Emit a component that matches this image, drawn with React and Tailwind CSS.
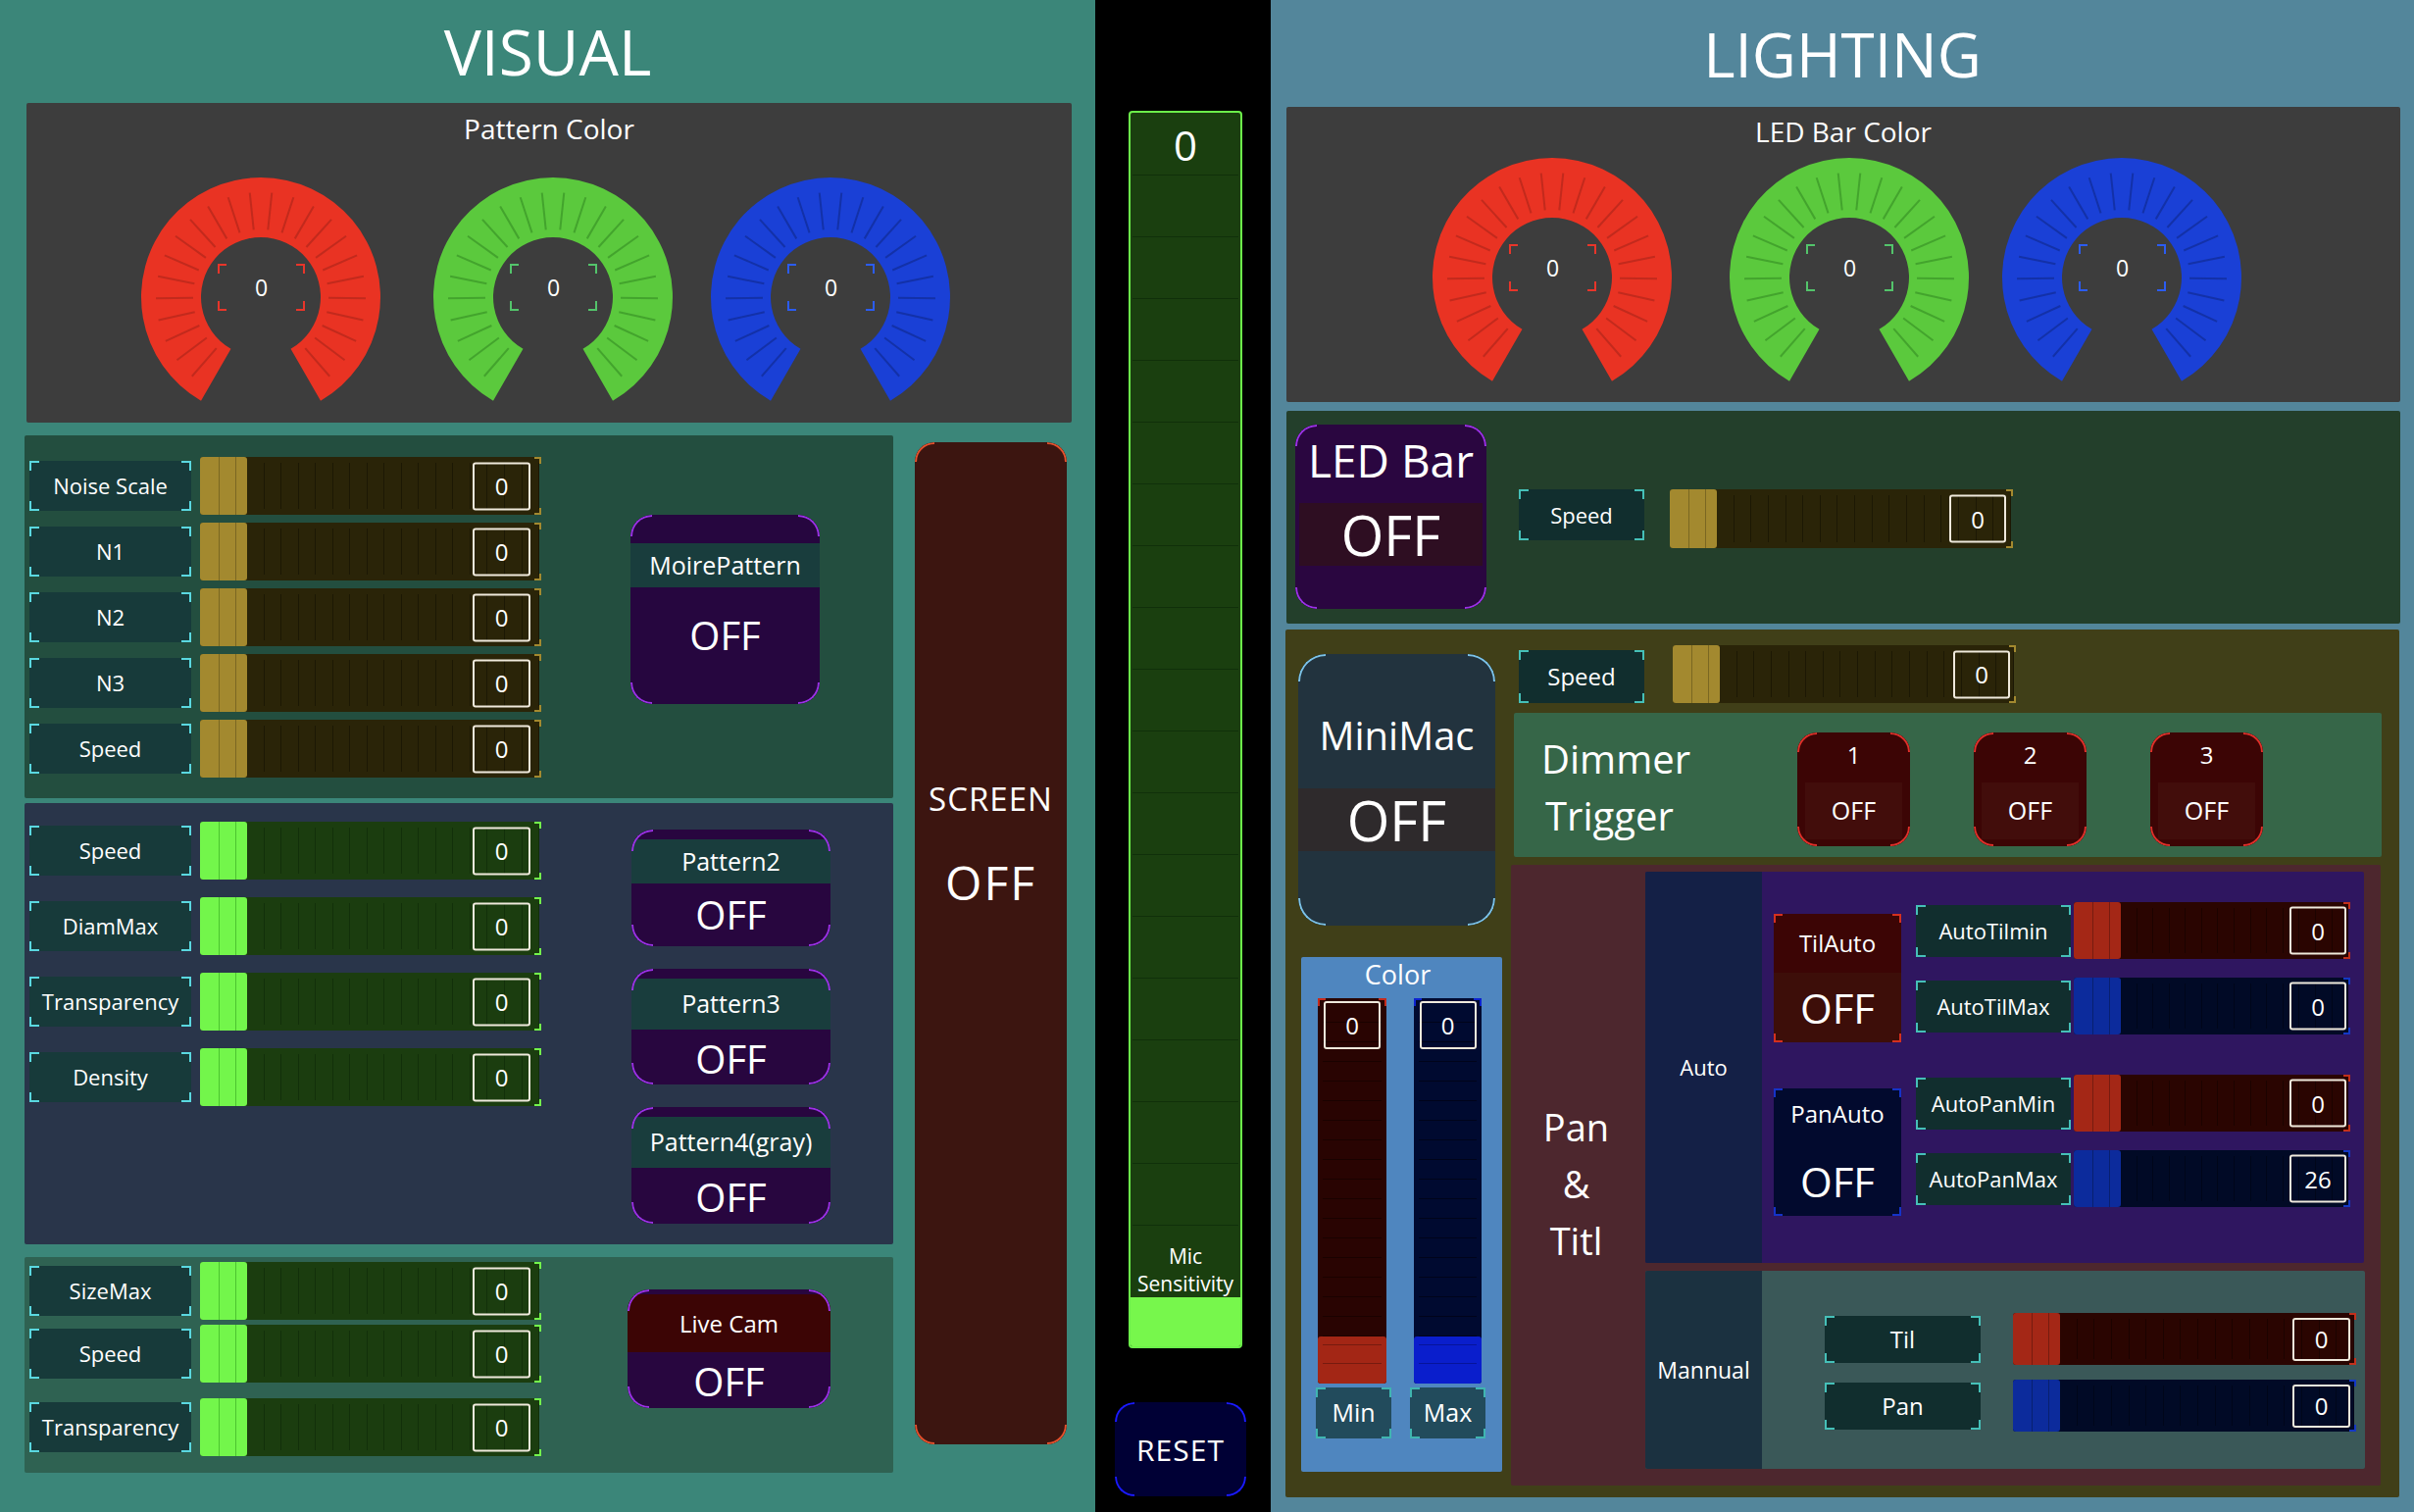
import React from "react";

// corner brackets (square)
const Brackets = ({ c, s = "w-[10px] h-[10px]" }) => (
  <>
    <span className={`pointer-events-none absolute left-0 top-0 border-l-2 border-t-2 ${s} ${c}`} />
    <span className={`pointer-events-none absolute right-0 top-0 border-r-2 border-t-2 ${s} ${c}`} />
    <span className={`pointer-events-none absolute left-0 bottom-0 border-l-2 border-b-2 ${s} ${c}`} />
    <span className={`pointer-events-none absolute right-0 bottom-0 border-r-2 border-b-2 ${s} ${c}`} />
  </>
);

// rounded corner arcs
const ARC = {
  s: ["w-[22px] h-[22px] rounded-tl-[22px]", "w-[22px] h-[22px] rounded-tr-[22px]", "w-[22px] h-[22px] rounded-bl-[22px]", "w-[22px] h-[22px] rounded-br-[22px]"],
  m: ["w-[20px] h-[20px] rounded-tl-[20px]", "w-[20px] h-[20px] rounded-tr-[20px]", "w-[20px] h-[20px] rounded-bl-[20px]", "w-[20px] h-[20px] rounded-br-[20px]"],
  l: ["w-[28px] h-[28px] rounded-tl-[28px]", "w-[28px] h-[28px] rounded-tr-[28px]", "w-[28px] h-[28px] rounded-bl-[28px]", "w-[28px] h-[28px] rounded-br-[28px]"],
};

const Arcs = ({ c, v = "s" }) => {
  const [tl, tr, bl, br] = ARC[v];
  return (
    <>
      <span className={`pointer-events-none absolute left-0 top-0 border-l-2 border-t-2 ${tl} ${c}`} />
      <span className={`pointer-events-none absolute right-0 top-0 border-r-2 border-t-2 ${tr} ${c}`} />
      <span className={`pointer-events-none absolute left-0 bottom-0 border-l-2 border-b-2 ${bl} ${c}`} />
      <span className={`pointer-events-none absolute right-0 bottom-0 border-r-2 border-b-2 ${br} ${c}`} />
    </>
  );
};

const Toggle = ({ className = "", bg, c, v = "s", round = "rounded-[22px]", children }) => (
  <div className={`relative shrink-0 flex flex-col overflow-hidden ${round} ${bg} ${className}`}>
    {children}
    <Arcs c={c} v={v} />
  </div>
);

const Label = ({ children, className = "", bg = "bg-[#173a3a]", c = "border-[#5ad8e0]" }) => (
  <div className={`relative shrink-0 flex items-center justify-center whitespace-nowrap ${bg} ${className}`}>
    {children}
    <Brackets c={c} />
  </div>
);

const SL = {
  gold: { track: "bg-[#2a2408]", handle: "bg-[#a3892f]", hl: "bg-[#7a6722]", line: "border-[#1c1804]", corner: "border-[#a3892f]" },
  green: { track: "bg-[#1b3d0f]", handle: "bg-[#73f64b]", hl: "bg-[#4cc52f]", line: "border-[#12300a]", corner: "border-[#73f64b]" },
  red: { track: "bg-[#2a0501]", handle: "bg-[#a42716]", hl: "bg-[#761b0f]", line: "border-[#1c0300]", corner: "border-[#c2301c]" },
  blue: { track: "bg-[#010a26]", handle: "bg-[#0c2b9c]", hl: "bg-[#08206f]", line: "border-[#00061a]", corner: "border-[#1438c4]" },
};

const Slider = ({ t, className = "", box = "w-[59px] h-[49px] right-[9px]", value = "0", n = 17 }) => {
  const s = SL[t];
  return (
    <div className={`relative shrink-0 flex rounded-[3px] ${s.track} ${className}`}>
      <div className={`h-full w-[48px] shrink-0 rounded-[3px] flex pl-[19px] gap-[16px] ${s.handle}`}>
        <span className={`w-px h-full ${s.hl}`} />
        <span className={`w-px h-full ${s.hl}`} />
      </div>
      <div className="flex-1 flex py-[6px]">
        {Array.from({ length: n }).map((_, i) => (
          <span key={i} className={`flex-1 border-r ${s.line}`} />
        ))}
      </div>
      <div className={`absolute top-1/2 -translate-y-1/2 ${box} border-2 border-[#efe9dc] rounded-[3px] flex items-center justify-center text-[24px] leading-none`}>
        {value}
      </div>
      <span className={`absolute -right-[2px] top-0 w-[7px] h-[7px] border-t-2 border-r-2 ${s.corner}`} />
      <span className={`absolute -right-[2px] bottom-0 w-[7px] h-[7px] border-b-2 border-r-2 ${s.corner}`} />
    </div>
  );
};

const VS = {
  red: { track: "bg-[#290402]", handle: "bg-[#a32615]", hl: "border-[#761b0f]", line: "border-[#1a0200]", corner: "border-[#c42a1c]" },
  blue: { track: "bg-[#000a30]", handle: "bg-[#0a1ecc]", hl: "border-[#06149a]", line: "border-[#00041a]", corner: "border-[#0c22d0]" },
};

const VSlider = ({ t, className = "" }) => {
  const s = VS[t];
  return (
    <div className={`relative shrink-0 flex flex-col rounded-[3px] ${s.track} ${className}`}>
      <div className="flex-1 flex flex-col justify-end overflow-hidden px-[5px]">
        {Array.from({ length: 17 }).map((_, i) => (
          <span key={i} className={`h-[20px] shrink-0 border-b ${s.line}`} />
        ))}
      </div>
      <div className={`h-[48px] shrink-0 rounded-[3px] flex flex-col px-[5px] pt-[8px] ${s.handle}`}>
        <span className={`h-[19px] border-t ${s.hl}`} />
        <span className={`border-t ${s.hl}`} />
      </div>
      <div className="absolute left-1/2 -translate-x-1/2 top-[3px] w-[58px] h-[49px] border-2 border-[#efe9dc] rounded-[3px] flex items-center justify-center text-[24px] leading-none">
        0
      </div>
      <span className={`absolute left-0 top-0 w-[8px] h-[8px] border-t-2 border-l-2 ${s.corner}`} />
      <span className={`absolute right-0 top-0 w-[8px] h-[8px] border-t-2 border-r-2 ${s.corner}`} />
    </div>
  );
};

// knob drawing
const KN = {
  red: { fill: "#e93323", tick: "#c22a1d", br: "border-[#e8352a]" },
  green: { fill: "#5bc93d", tick: "#43a42d", br: "border-[#53c46b]" },
  blue: { fill: "#1a40d6", tick: "#1331a8", br: "border-[#2b5cf2]" },
};
const pt = (r, d) => {
  const a = (d * Math.PI) / 180;
  return [124 - r * Math.sin(a), 124 + r * Math.cos(a)];
};
const ps = (r, d) => pt(r, d).map((v) => v.toFixed(2)).join(" ");
const RING = `M ${ps(122, 30)} A 122 122 0 1 1 ${ps(122, 330)} L ${ps(61, 330)} A 61 61 0 1 0 ${ps(61, 30)} Z`;
const TICKS = Array.from({ length: 24 }, (_, i) => 41 + (i * 278) / 23);

const Knob = ({ color, className = "" }) => {
  const k = KN[color];
  return (
    <div className={`relative w-[248px] h-[232px] shrink-0 ${className}`}>
      <svg width="248" height="232" viewBox="0 0 248 232">
        <path d={RING} fill={k.fill} />
        {TICKS.map((d, i) => {
          const [x1, y1] = pt(69, d);
          const [x2, y2] = pt(107, d);
          return <line key={i} x1={x1} y1={y1} x2={x2} y2={y2} stroke={k.tick} strokeWidth="2" />;
        })}
      </svg>
      <div className="absolute left-[80px] top-[90px] w-[89px] h-[48px] flex items-center justify-center text-[23px] leading-none">
        0
        <Brackets c={k.br} s="w-[9px] h-[10px]" />
      </div>
    </div>
  );
};

const Row = ({ label, t, lc = "" }) => (
  <div className="flex items-center gap-[9px]">
    <Label className={`w-[165px] h-[51px] text-[22px] ${lc}`}>{label}</Label>
    <Slider t={t} className="w-[346px] h-[59px]" />
  </div>
);

const Visual = () => (
  <div className="w-[1117px] h-full shrink-0 bg-[#3b8679] flex flex-col">
    <div className="h-[105px] flex items-center justify-center text-[64px] leading-none">VISUAL</div>
    <div className="ml-[27px] w-[1066px] h-[326px] bg-[#3d3d3d] rounded-[2px] flex flex-col">
      <div className="pt-[9px] text-[28px] leading-[34px] text-center">Pattern Color</div>
      <div className="mt-[31px] flex">
        <Knob color="red" className="ml-[115px]" />
        <Knob color="green" className="ml-[50px]" />
        <Knob color="blue" className="ml-[35px]" />
      </div>
    </div>

    <div className="mt-[13px] flex">
      <div className="ml-[25px] w-[886px] flex flex-col">
        {/* noise section */}
        <div className="h-[370px] bg-[#234e3f] rounded-[2px] flex">
          <div className="pl-[5px] pt-[22px] flex flex-col gap-[8px]">
            {["Noise Scale", "N1", "N2", "N3", "Speed"].map((l) => (
              <Row key={l} label={l} t="gold" />
            ))}
          </div>
          <Toggle className="ml-[93px] mt-[81px] w-[193px] h-[193px]" bg="bg-[#26063f]" c="border-[#9b32e6]">
            <div className="h-[29px] shrink-0" />
            <div className="h-[45px] shrink-0 bg-[#193d3d] flex items-center justify-center text-[25px]">MoirePattern</div>
            <div className="mt-[24px] text-center text-[40px] leading-[50px]">OFF</div>
          </Toggle>
        </div>

        {/* pattern section */}
        <div className="mt-[5px] h-[450px] bg-[#29354a] rounded-[2px] flex">
          <div className="pl-[5px] pt-[19px] flex flex-col gap-[18px]">
            {["Speed", "DiamMax", "Transparency", "Density"].map((l) => (
              <Row key={l} label={l} t="green" />
            ))}
          </div>
          <div className="ml-[94px] mt-[27px] flex flex-col gap-[23px]">
            <Toggle className="w-[203px] h-[119px]" bg="bg-[#28063f]" c="border-[#9b32e6]">
              <div className="mt-[10px] h-[45px] shrink-0 bg-[#193d3d] flex items-center justify-center text-[25px]">Pattern2</div>
              <div className="flex-1 flex items-center justify-center text-[40px]">OFF</div>
            </Toggle>
            <Toggle className="w-[203px] h-[118px]" bg="bg-[#28063f]" c="border-[#9b32e6]">
              <div className="mt-[10px] h-[52px] shrink-0 bg-[#193d3d] flex items-center justify-center text-[25px]">Pattern3</div>
              <div className="flex-1 flex items-center justify-center text-[40px]">OFF</div>
            </Toggle>
            <Toggle className="w-[203px] h-[119px]" bg="bg-[#28063f]" c="border-[#9b32e6]">
              <div className="mt-[10px] h-[52px] shrink-0 bg-[#193d3d] flex items-center justify-center text-[25px]">Pattern4(gray)</div>
              <div className="flex-1 flex items-center justify-center text-[40px]">OFF</div>
            </Toggle>
          </div>
        </div>

        {/* cam section */}
        <div className="mt-[13px] h-[220px] bg-[#2f6252] rounded-[2px] flex">
          <div className="pl-[5px] pt-[5px] flex flex-col">
            <Row label="SizeMax" t="green" />
            <div className="mt-[5px]">
              <Row label="Speed" t="green" />
            </div>
            <div className="mt-[16px]">
              <Row label="Transparency" t="green" />
            </div>
          </div>
          <Toggle className="ml-[90px] mt-[33px] w-[207px] h-[121px]" bg="bg-[#28063f]" c="border-[#9b32e6]">
            <div className="mt-[5px] h-[59px] shrink-0 bg-[#3c0505] flex items-center justify-center text-[24px]">Live Cam</div>
            <div className="flex-1 flex items-center justify-center text-[40px]">OFF</div>
          </Toggle>
        </div>
      </div>

      <Toggle className="ml-[22px] mt-[7px] w-[155px] h-[1022px] items-center" bg="bg-[#3c1510]" c="border-[#e4502c]" v="m" round="rounded-[20px]">
        <div className="mt-[344px] text-[33px] leading-[40px] tracking-[1px]">SCREEN</div>
        <div className="mt-[37px] text-[48px] leading-[56px] tracking-[2px]">OFF</div>
      </Toggle>
    </div>
  </div>
);

const Middle = () => (
  <div className="w-[179px] h-full shrink-0 bg-black flex flex-col">
    <div className="ml-[34px] mt-[113px] w-[116px] h-[1262px] border-2 border-[#6cf04a] rounded-[4px] bg-[#1a3f0f] flex flex-col overflow-hidden">
      <div className="h-[63px] shrink-0 flex items-start justify-center pt-[8px] text-[42px] leading-[50px]">0</div>
      {Array.from({ length: 17 }).map((_, i) => (
        <div key={i} className="h-[63px] shrink-0 mx-[2px] border-t border-[#10300a]" />
      ))}
      <div className="flex-1 mx-[2px] border-t border-[#10300a] flex flex-col justify-end items-center text-[21px] leading-[28px] text-center">
        <span>Mic</span>
        <span>Sensitivity</span>
      </div>
      <div className="h-[50px] shrink-0 bg-[#77f74c]" />
    </div>
    <Toggle className="ml-[20px] mt-[55px] w-[134px] h-[96px] items-center justify-center" bg="bg-[#000035]" c="border-[#1a1aff]" v="m" round="rounded-[20px]">
      <span className="text-[30px] tracking-[1px]">RESET</span>
    </Toggle>
  </div>
);

const DimBtn = ({ n }) => (
  <Toggle className="mt-[20px] w-[115px] h-[116px] items-center" bg="bg-[#3c0505]" c="border-[#e0302a]" v="m" round="rounded-[20px]">
    <div className="mt-[8px] text-[24px] leading-[30px]">{n}</div>
    <div className="mt-[13px] w-[99px] h-[58px] bg-[#420d0b] flex items-center justify-center text-[25px]">OFF</div>
  </Toggle>
);

const AutoRow = ({ label, t, value = "0" }) => (
  <div className="flex items-center">
    <Label className="w-[158px] h-[53px] text-[22px]" bg="bg-[#112e2e]" c="border-[#45c0b8]">{label}</Label>
    <Slider t={t} className="ml-[3px] w-[280px] h-[58px]" box="w-[58px] h-[49px] right-[2px]" value={value} n={14} />
  </div>
);

const Lighting = () => (
  <div className="w-[1166px] h-full shrink-0 bg-[#53869b] flex flex-col">
    <div className="h-[109px] flex items-center justify-center text-[62px] leading-none">LIGHTING</div>
    <div className="ml-[16px] w-[1136px] h-[301px] bg-[#3d3d3d] rounded-[2px] flex flex-col">
      <div className="pt-[8px] text-[28px] leading-[34px] text-center">LED Bar Color</div>
      <div className="mt-[8px] flex">
        <Knob color="red" className="ml-[147px]" />
        <Knob color="green" className="ml-[55px]" />
        <Knob color="blue" className="ml-[30px]" />
      </div>
    </div>

    {/* LED bar */}
    <div className="mt-[9px] ml-[16px] w-[1136px] h-[217px] bg-[#233f2b] rounded-[2px] flex items-start">
      <Toggle className="ml-[9px] mt-[14px] w-[195px] h-[188px]" bg="bg-[#2a0640]" c="border-[#9b32e6]">
        <div className="mt-[9px] text-center text-[46px] leading-[54px]">LED Bar</div>
        <div className="mt-[17px] mx-[4px] h-[64px] bg-[#2e0e22] flex items-center justify-center text-[56px]">OFF</div>
      </Toggle>
      <Label className="ml-[33px] mt-[80px] w-[128px] h-[52px] text-[22px]" bg="bg-[#112e2e]" c="border-[#45c0b8]">Speed</Label>
      <Slider t="gold" className="ml-[26px] mt-[80px] w-[348px] h-[60px]" box="w-[58px] h-[49px] right-[5px]" />
    </div>

    {/* MiniMac */}
    <div className="mt-[6px] ml-[15px] w-[1136px] h-[885px] bg-[#403f18] rounded-[2px] flex">
      <div className="ml-[13px] flex flex-col">
        <Toggle className="mt-[25px] w-[201px] h-[277px]" bg="bg-[#22333e]" c="border-[#7cc3e8]" v="l" round="rounded-[28px]">
          <div className="mt-[59px] text-center text-[40px] leading-[48px]">MiniMac</div>
          <div className="mt-[30px] h-[64px] bg-[#2e2a2c] flex items-center justify-center text-[56px]">OFF</div>
        </Toggle>
        <div className="ml-[3px] mt-[32px] w-[205px] h-[525px] bg-[#4f86bf] rounded-[2px] flex flex-col">
          <div className="mt-[1px] pr-[8px] text-center text-[27px] leading-[34px]">Color</div>
          <div className="mt-[7px] pl-[17px] flex gap-[28px]">
            <VSlider t="red" className="w-[70px] h-[393px]" />
            <VSlider t="blue" className="w-[69px] h-[393px]" />
          </div>
          <div className="mt-[4px] pl-[15px] flex gap-[19px]">
            <Label className="w-[77px] h-[52px] text-[25px] rounded-[3px]" bg="bg-[#224b5c]" c="border-[#3fb5b0]">Min</Label>
            <Label className="w-[77px] h-[52px] text-[25px] rounded-[3px]" bg="bg-[#224b5c]" c="border-[#3fb5b0]">Max</Label>
          </div>
        </div>
      </div>

      <div className="ml-[9px] flex flex-col">
        <div className="mt-[16px] flex items-start">
          <Label className="ml-[8px] mt-[5px] w-[128px] h-[54px] text-[24px]" bg="bg-[#112e2e]" c="border-[#45c0b8]">Speed</Label>
          <Slider t="gold" className="ml-[29px] w-[348px] h-[59px]" box="w-[58px] h-[49px] right-[4px]" />
        </div>

        <div className="mt-[10px] ml-[3px] w-[885px] h-[147px] bg-[#366648] rounded-[2px] flex items-start">
          <div className="w-[289px] shrink-0 pl-[28px] mt-[18px] flex flex-col text-[40px] leading-[58px]">
            <span>Dimmer</span>
            <span className="pl-[4px]">Trigger</span>
          </div>
          <DimBtn n="1" />
          <div className="w-[65px] shrink-0" />
          <DimBtn n="2" />
          <div className="w-[65px] shrink-0" />
          <DimBtn n="3" />
        </div>

        <div className="mt-[8px] w-[887px] h-[633px] bg-[#4d272e] rounded-[2px] flex">
          <div className="w-[137px] shrink-0 flex flex-col items-center pt-[238px] pr-[4px] text-[38px] leading-[58px]">
            <span>Pan</span>
            <span>&amp;</span>
            <span>Titl</span>
          </div>
          <div className="flex flex-col">
            {/* auto */}
            <div className="mt-[7px] w-[733px] h-[399px] bg-[#2f1660] rounded-[2px] flex">
              <div className="w-[119px] shrink-0 bg-[#142046] rounded-l-[2px] flex items-center justify-center text-[22px]">Auto</div>
              <div className="flex flex-col">
                <div className="mt-[31px] ml-[12px] flex items-start">
                  <div className="relative mt-[12px] w-[130px] h-[131px] shrink-0 flex flex-col">
                    <div className="h-[60px] bg-[#3c0505] flex items-center justify-center text-[24px]">TilAuto</div>
                    <div className="flex-1 bg-[#3d0e09] flex items-center justify-center text-[42px]">OFF</div>
                    <Brackets c="border-[#d4301f]" s="w-[9px] h-[9px]" />
                  </div>
                  <div className="ml-[15px] flex flex-col gap-[19px]">
                    <AutoRow label="AutoTilmin" t="red" />
                    <AutoRow label="AutoTilMax" t="blue" />
                  </div>
                </div>
                <div className="mt-[33px] ml-[12px] flex items-start">
                  <div className="relative mt-[14px] w-[130px] h-[130px] shrink-0 bg-[#020a2e] flex flex-col items-center">
                    <div className="mt-[11px] text-[24px] leading-[30px]">PanAuto</div>
                    <div className="mt-[28px] text-[42px] leading-[52px]">OFF</div>
                    <Brackets c="border-[#1533c8]" s="w-[9px] h-[9px]" />
                  </div>
                  <div className="ml-[15px] flex flex-col gap-[19px]">
                    <AutoRow label="AutoPanMin" t="red" />
                    <AutoRow label="AutoPanMax" t="blue" value="26" />
                  </div>
                </div>
              </div>
            </div>
            {/* manual */}
            <div className="mt-[8px] w-[734px] h-[202px] bg-[#3a5858] rounded-[2px] flex">
              <div className="w-[119px] shrink-0 bg-[#1b3140] rounded-l-[2px] flex items-center justify-center text-[23px]">Mannual</div>
              <div className="pl-[64px] pt-[43px] flex flex-col gap-[15px]">
                {[
                  ["Til", "red"],
                  ["Pan", "blue"],
                ].map(([l, t]) => (
                  <div key={l} className="flex items-center">
                    <Label className="w-[159px] h-[48px] text-[24px]" bg="bg-[#112e2e]" c="border-[#45c0b8]">{l}</Label>
                    <Slider t={t} className="ml-[33px] w-[348px] h-[53px]" box="w-[59px] h-[44px] right-[4px]" />
                  </div>
                ))}
              </div>
            </div>
          </div>
        </div>
      </div>
    </div>
  </div>
);

export default function App() {
  return (
    <div className="flex w-[2462px] h-[1542px] overflow-hidden bg-black text-white font-['Open_Sans',sans-serif]">
      <Visual />
      <Middle />
      <Lighting />
    </div>
  );
}
